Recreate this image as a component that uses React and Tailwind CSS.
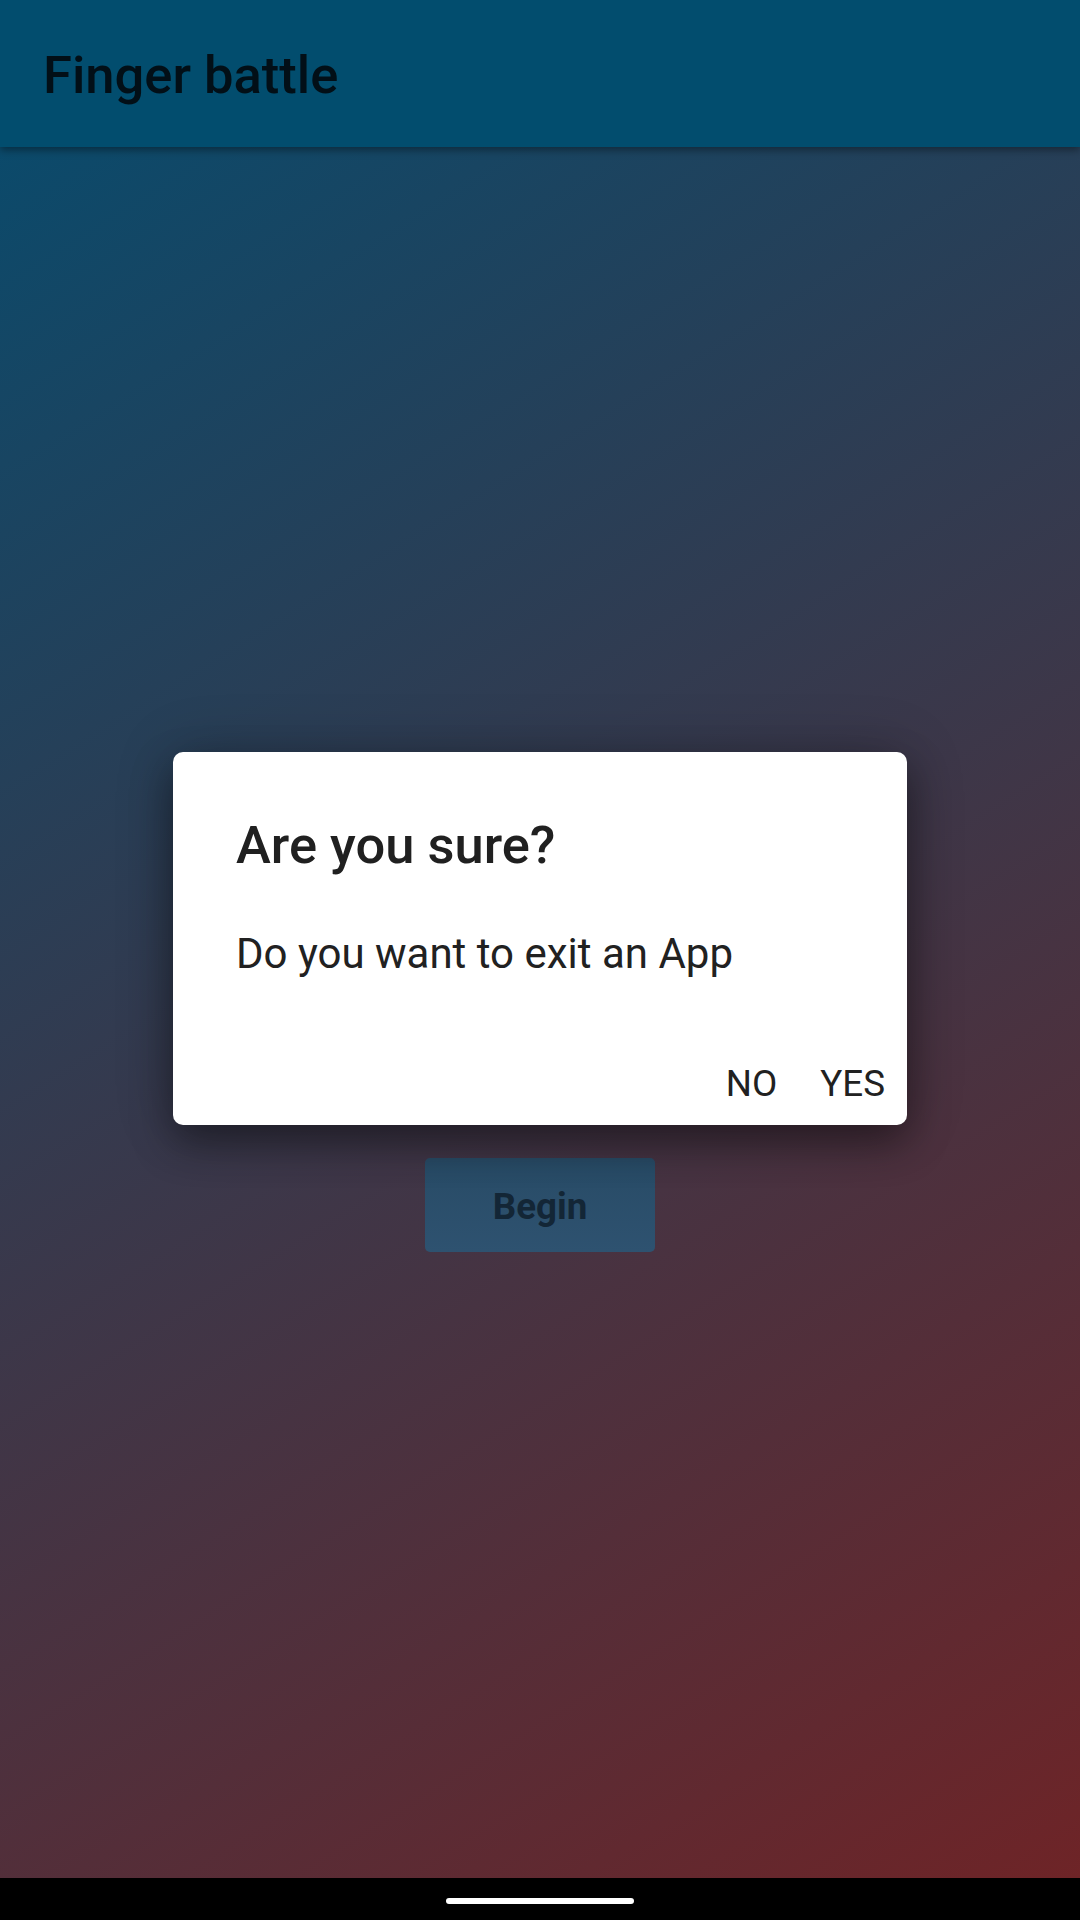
export default function App() {
  return (
    <div className="relative flex h-[1920px] w-[1080px] flex-col overflow-hidden font-['Roboto',sans-serif]">
      <header className="relative z-10 h-[147px] bg-[#024d6e] pl-[43px] pt-[45px] shadow-[0_3px_8px_rgba(0,0,0,0.4)]">
        <h1 className="text-[52.5px] font-medium leading-[1.172] text-[#020f17]">Finger battle</h1>
      </header>

      <main className="flex flex-1 flex-col items-center bg-[linear-gradient(148deg,#0b4a6b,#6e2427)] pt-[1011px]">
        <button className="h-[94px] w-[230px] rounded-[5px] bg-[linear-gradient(to_bottom,#284b66,#2e5270)] pt-[4px] text-[36.75px] font-bold leading-[1.172] text-[#132636]">
          Begin
        </button>
      </main>

      <div className="flex h-[42px] justify-center bg-black pt-[20px]">
        <div className="h-[6px] w-[188px] rounded-full bg-white" />
      </div>

      {/* dialog */}
      <div className="absolute inset-0 z-20 flex justify-center pt-[752px]">
        <div className="h-[373px] w-[734px] rounded-[10px] bg-white shadow-[0_18px_40px_rgba(0,0,0,0.4),0_0_60px_rgba(0,0,0,0.2)]">
          <div className="px-[63px] pt-[63px]">
            <h2 className="text-[52.5px] font-medium leading-[1.172] text-[#202020]">Are you sure?</h2>
            <p className="mt-[52.5px] text-[42px] leading-[1.172] text-[#212121]">Do you want to exit an App</p>
          </div>
          <div className="flex justify-end gap-[43px] pr-[22px] pt-[84px] text-[36.75px] leading-[1.172] text-[#212121]">
            <button>NO</button>
            <button>YES</button>
          </div>
        </div>
      </div>
    </div>
  );
}
